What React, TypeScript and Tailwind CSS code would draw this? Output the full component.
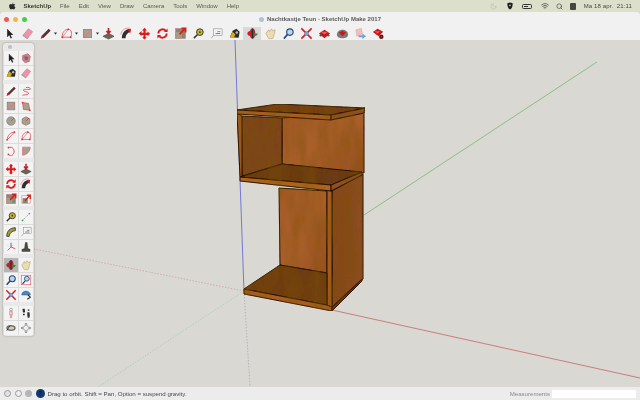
import React from 'react';
import { Moon, Search, Wifi } from 'lucide-react';

type IconName =
  | 'select' | 'component' | 'paint' | 'eraser' | 'pencil' | 'freehand' | 'rect' | 'rotrect'
  | 'circle' | 'polygon' | 'arc' | 'arc2' | 'arc3' | 'pie' | 'move' | 'pushpull' | 'rotate'
  | 'followme' | 'scale' | 'offset' | 'tape' | 'dimension' | 'protractor' | 'text' | 'axes'
  | 'text3d' | 'orbit' | 'pan' | 'zoom' | 'zoomwin' | 'extents' | 'prev' | 'position'
  | 'walk' | 'look' | 'section' | 'gem' | 'gem2' | 'share' | 'gem3';

// all icons on a 14x14 box
const Glyph = ({ name }: { name: IconName }) => {
  switch (name) {
    case 'select':
      return <path d="M4.5 2v9l2.2-2 1.6 3.4 1.4-.7-1.6-3.2h3z" fill="#222" />;
    case 'component':
      return <g><path d="M3 4l6-2 3 3-1 6-5 1.5-3-3z" fill="#b9858c" stroke="#d8606c" strokeWidth=".8" /><path d="M5 5l4 .5.5 3L6 9.5z" fill="#7e6468" /></g>;
    case 'paint':
      return <g><path d="M2 11L5 4l4-2 3.5 3-1 6.5z" fill="#2b2b2b" /><path d="M2 11L5 5l3 3-2 4z" fill="#d6a91f" /><circle cx="9.5" cy="6" r="1.4" fill="#b9b9b9" /></g>;
    case 'eraser':
      return <g><path d="M2 9l6-7 4.5 3-5.5 7.5z" fill="#ee93ab" stroke="#cf6f8a" strokeWidth=".6" /><path d="M2 9l5 3.5" stroke="#a9a0a2" strokeWidth="1.3" /></g>;
    case 'pencil':
      return <g><path d="M2 12.5l1-3L10.5 2l2 2L5 11.5z" fill="#5a3030" /><path d="M2 12.5l1-3 2 2z" fill="#d22" /></g>;
    case 'freehand':
      return <path d="M3 12c2-1 6 0 7-2S4 8 4 6s7 0 8-1-2-3-5-2" fill="none" stroke="#d8404c" strokeWidth="1" />;
    case 'rect':
      return <g><rect x="2.5" y="2.5" width="9" height="9" fill="#a8a08e" stroke="#777" strokeWidth=".7" /><path d="M2.5 11.5l9-9" stroke="#e8707c" strokeWidth=".9" /></g>;
    case 'rotrect':
      return <g><path d="M3 3l7 1 1.5 8-7.5-1z" fill="#a8a08e" stroke="#d33" strokeWidth=".7" /><circle cx="3" cy="3" r="1" fill="#d33" /><circle cx="11.5" cy="12" r="1" fill="#d33" /></g>;
    case 'circle':
      return <g><circle cx="7" cy="7" r="5" fill="#a8a08e" stroke="#777" strokeWidth=".7" /><path d="M7 7l3.5-3.5" stroke="#d33" strokeWidth=".9" /></g>;
    case 'polygon':
      return <g><path d="M7 2l4.5 2.5V10L7 12l-4.500-2V4.500z" fill="#a8a08e" stroke="#777" strokeWidth=".7" /><path d="M7 7l3.5-3.5" stroke="#d33" strokeWidth=".9" /></g>;
    case 'arc':
      return <g><path d="M2.5 11.5C3 6 6 3 11 2.5M2.5 11.5L11 2.5" fill="none" stroke="#d8404c" strokeWidth=".9" /><circle cx="11" cy="2.5" r="1" fill="#d33" /><circle cx="2.5" cy="11.5" r="1" fill="#d33" /></g>;
    case 'arc2':
      return <g><path d="M2.5 11C2 6 5 2.5 9 2.5s4 5 2.5 8.500z" fill="none" stroke="#d8606c" strokeWidth="1" /><path d="M2.5 11L9 2.500" stroke="#d8606c" strokeWidth=".7" /><circle cx="9" cy="2.5" r="1" fill="#d33" /><circle cx="2.5" cy="11" r="1" fill="#d33" /><circle cx="11.5" cy="11" r="1" fill="#d33" /></g>;
    case 'arc3':
      return <g><path d="M4 3c5-2 8 3 6 7s-5 2-6 1" fill="none" stroke="#d8404c" strokeWidth="1" /><circle cx="4" cy="3" r="1" fill="#d33" /><circle cx="4" cy="11" r="1" fill="#d33" /></g>;
    case 'pie':
      return <path d="M3 2.5h9c0 5-4 9-9 9.5z" fill="#a8a08e" stroke="#d8606c" strokeWidth=".7" />;
    case 'move':
      return <path d="M7 .8l2.6 3H8.2v2.4h2v-1.400l3 2.600-3 2.600V8.600h-2V11h1.400L7 13.400 4.400 11h1.400V8.600h-2V10L.8 7l3-2.600v1.800h2V3.800H4.400z" fill="#d91d1d" />;
    case 'pushpull':
      return <g><path d="M1 10l6-3 6 3-6 3z" fill="#6b6559" stroke="#3a3a3a" strokeWidth=".6" /><path d="M7 1v5M4.8 4.2L7 7l2.2-2.8" fill="none" stroke="#c62020" strokeWidth="1.8" /></g>;
    case 'rotate':
      return <g><path d="M2.5 7a4.5 4.5 0 0 1 8-2.8" fill="none" stroke="#d91d1d" strokeWidth="2" /><path d="M11.5 7a4.5 4.5 0 0 1-8 2.8" fill="none" stroke="#d91d1d" strokeWidth="2" /><path d="M12.5 1.5v4h-4zM1.5 12.5v-4h4z" fill="#d91d1d" /></g>;
    case 'followme':
      return <g><path d="M2 12C2 7 5 2.5 11 2v3.5C8 6 6 9 6 12z" fill="#2f2f2f" /><path d="M1 8c0-4 4-7 9-7" fill="none" stroke="#e9808c" strokeWidth=".9" /><path d="M8 3l4-1-1 5z" fill="#d91d1d" /></g>;
    case 'scale':
      return <g><rect x="1.5" y="1.5" width="11" height="11" fill="#8c8471" stroke="#d8808a" strokeWidth=".6" /><rect x="1.5" y="5.5" width="7" height="7" fill="#a59b86" /><path d="M6 8l6-6.5M8 1.5h4.5V6" fill="none" stroke="#d91d1d" strokeWidth="1.8" /></g>;
    case 'offset':
      return <g><path d="M2 3h10v9H2z" fill="none" stroke="#e9808c" strokeWidth=".7" /><rect x="3" y="6" width="6" height="6" fill="#8c8471" /><path d="M6 9l5-6M8 2.5h4V7" fill="none" stroke="#d91d1d" strokeWidth="1.6" /></g>;
    case 'tape':
      return <g><path d="M2 12l4-4" stroke="#333" strokeWidth="1.6" /><circle cx="8.5" cy="5.5" r="3.6" fill="#c9b52a" stroke="#333" strokeWidth="1" /><circle cx="8.5" cy="5.5" r="1" fill="#333" /></g>;
    case 'dimension':
      return <g><path d="M3 11l8-8" stroke="#9a9a9a" strokeWidth=".9" strokeDasharray="1.5 1" /><circle cx="3" cy="11" r="1" fill="#3a3" /><circle cx="11" cy="3" r="1" fill="#888" /></g>;
    case 'protractor':
      return <path d="M2 12C2 6 6 2 12 2v3.5C8.5 5.5 5 8.500 5 12z" fill="#a5a02c" stroke="#333" strokeWidth="1" />;
    case 'text':
      return <g><rect x="4" y="2" width="9" height="7" fill="#f5f5f5" stroke="#888" strokeWidth=".6" /><path d="M6 5h.01M8 5h3M6 7h5" stroke="#555" strokeWidth=".8" /><path d="M1.500 12L4 9" stroke="#999" strokeWidth=".8" /></g>;
    case 'axes':
      return <g><path d="M7 2v5" stroke="#44c" strokeWidth="1" /><path d="M7 7l-4 4" stroke="#3a3" strokeWidth="1" /><path d="M7 7l5 2" stroke="#d33" strokeWidth="1" /><path d="M7 7L3 5M7 7l3-3" stroke="#c99" strokeWidth=".7" strokeDasharray="1 1" /></g>;
    case 'text3d':
      return <path d="M6 1.500h2.500l1 7 2.500 1v3H2v-3l3-1z" fill="#4a4a44" />;
    case 'orbit':
      return <g><ellipse cx="7" cy="7" rx="3" ry="5.500" fill="#b53030" /><path d="M7 7h5.500a5.500 3 0 0 1-5.500 3z" fill="#2b8a3a" /><path d="M1.500 7a5.500 3 0 0 0 5.500 3V4a5.500 3 0 0 0-5.500 3z" fill="#c82020" /><path d="M7 1.500v11" stroke="#2a2a3a" strokeWidth="1.400" /></g>;
    case 'pan':
      return <path d="M2 7l3-4 1 2 2-3 1.500 2L12 3l-1 5-1.500 4.500H5z" fill="#ecdcb2" stroke="#b8a67a" strokeWidth=".7" />;
    case 'zoom':
      return <g><circle cx="8.500" cy="5.500" r="3.500" fill="#bcd3ea" stroke="#264a7a" strokeWidth="1.200" /><path d="M6 8l-4 4.500" stroke="#264a7a" strokeWidth="1.800" /></g>;
    case 'zoomwin':
      return <g><rect x="1.500" y="1.500" width="11" height="11" fill="none" stroke="#e9606c" strokeWidth=".8" /><circle cx="8" cy="5.500" r="2.800" fill="#bcd3ea" stroke="#264a7a" strokeWidth="1" /><path d="M6 8l-3 3.500" stroke="#264a7a" strokeWidth="1.500" /></g>;
    case 'extents':
      return <g><rect x="4.500" y="4.500" width="5" height="5" fill="#6fa4d8" /><path d="M1.500 1.500l4 4M12.500 1.500l-4 4M1.500 12.500l4-4M12.500 12.500l-4-4" stroke="#cc2222" strokeWidth="1.700" /></g>;
    case 'prev':
      return <g><path d="M2 7c0-3 3-5 6-4.500S12 5 12 7H9L2 7z" fill="#4d86bd" stroke="#2c5a8a" strokeWidth=".6" /><path d="M9 6.500l3 3-3.500 2.500" fill="none" stroke="#333" strokeWidth="1.400" /></g>;
    case 'position':
      return <g><circle cx="7" cy="3" r="1.600" fill="#eee" stroke="#777" strokeWidth=".6" /><path d="M5.500 5h3v4h-.8v3.500H6.300V9h-.8z" fill="#f2d6d6" stroke="#c55" strokeWidth=".6" /></g>;
    case 'walk':
      return <path d="M3 2h2.500l.5 3.500-.5 1H3.500L3 4zM8.500 6h2.500l.5 3.500-.5 3H9l-.5-3zM3.500 8h2v1.500h-2zM9 3h2v1.500H9z" fill="#333" />;
    case 'look':
      return <g><ellipse cx="7" cy="7" rx="5.500" ry="3.500" fill="#77736a" /><ellipse cx="7" cy="7" rx="3.500" ry="1.800" fill="#cfccc5" /><path d="M2 10l4-6" stroke="#333" strokeWidth="1" /></g>;
    case 'section':
      return <g><path d="M7 1l2 2H5zM7 13l2-2H5zM1 7l2-2v4zM13 7l-2-2v4z" fill="#777" /><circle cx="7" cy="7" r="3" fill="none" stroke="#888" strokeWidth=".8" /></g>;
    case 'gem':
      return <g><path d="M1 7l6-4 6 4-6 5z" fill="#c81414" /><path d="M3 5h8l-4 3z" fill="#ef5b5b" /><circle cx="3" cy="9" r="1.300" fill="#555" /><circle cx="11" cy="9" r="1.300" fill="#555" /></g>;
    case 'gem2':
      return <g><path d="M1 8c0-3 3-5 6-5s6 2 6 5-3 4-6 4-6-1-6-4z" fill="#7a7a7a" /><path d="M3 6l4-2 4 2-4 4z" fill="#cf1717" /></g>;
    case 'share':
      return <g><path d="M2 3l6-1.500 1 6L3 10z" fill="#f4bcbc" stroke="#e59a9a" strokeWidth=".5" /><path d="M5 9h4V7l4 3-4 3v-2H5z" fill="#6ea4dc" /></g>;
    case 'gem3':
      return <g><path d="M1 5.500L6 2l6 3-5 5z" fill="#c81414" /><path d="M3 4.500h6L6 7z" fill="#ef5b5b" /><circle cx="10" cy="10.500" r="2.400" fill="#5a1010" /><circle cx="10" cy="10.500" r=".9" fill="#d33" /></g>;
  }
};

const Icon = ({ name, size = 12 }: { name: IconName; size?: number }) => (
  <svg viewBox="0 0 14 14" width={size} height={size}>
    <Glyph name={name} />
  </svg>
);

const Caret = () => (
  <svg viewBox="0 0 4 3" className="w-[3px] h-[3px] shrink-0">
    <path d="M0 0h4L2 3z" fill="#333" />
  </svg>
);

const ToolButton = ({ name, active }: { name: IconName; active?: boolean }) => (
  <div className={`flex items-center justify-center w-[18px] h-[15px] shrink-0 rounded-[2px] ${active ? 'bg-[#d9d9d9]' : ''}`}>
    <Icon name={name} size={13} />
  </div>
);

const paletteGroups: IconName[][] = [
  ['select', 'component', 'paint', 'eraser'],
  ['pencil', 'freehand', 'rect', 'rotrect', 'circle', 'polygon', 'arc', 'arc2', 'arc3', 'pie'],
  ['move', 'pushpull', 'rotate', 'followme', 'scale', 'offset'],
  ['tape', 'dimension', 'protractor', 'text', 'axes', 'text3d'],
  ['orbit', 'pan', 'zoom', 'zoomwin', 'extents', 'prev'],
  ['position', 'walk', 'look', 'section'],
];

const Palette = () => (
  <div className="absolute left-[3px] top-[3px] w-[31px] bg-[#e9e9e9] rounded-[3px] shadow-[0_0_2px_rgba(0,0,0,0.35)] pb-[1px]">
    <div className="h-[8px] flex items-center pl-[5px] rounded-t-[3px]">
      <div className="w-[4px] h-[4px] rounded-full bg-[#bdbdbd]" />
    </div>
    <div className="flex flex-col gap-[4px]">
      {paletteGroups.map((group, i) => (
        <div key={i} className="grid grid-cols-2 gap-px px-px bg-[#dcdcdc]">
          {group.map((name) => (
            <div
              key={name}
              className={`h-[14px] flex items-center justify-center ${name === 'orbit' ? 'bg-[#b4b4b4]' : 'bg-[#f3f3f3]'}`}
            >
              <Icon name={name} size={12} />
            </div>
          ))}
        </div>
      ))}
    </div>
  </div>
);

// the model and the axes, in page pixels minus the 40px of chrome above the viewport
const Model = () => (
  <svg viewBox="0 40 640 347" className="absolute inset-0 w-full h-full">
    <defs>
      <linearGradient id="backWood" x1="0" y1="0" x2="1" y2="1">
        <stop offset="0" stopColor="#a35a27" />
        <stop offset=".5" stopColor="#aa602b" />
        <stop offset="1" stopColor="#975122" />
      </linearGradient>
      <linearGradient id="darkWood" x1="0" y1="0" x2="1" y2="0">
        <stop offset="0" stopColor="#84481d" />
        <stop offset="1" stopColor="#8c4e21" />
      </linearGradient>
      {/* soft grain over the wood faces */}
      <filter id="grain" x="0" y="0" width="100%" height="100%">
        <feTurbulence type="fractalNoise" baseFrequency="0.09 0.025" numOctaves="2" seed="4" result="noise" />
        <feColorMatrix in="noise" type="matrix" values="0 0 0 0 0.2  0 0 0 0 0.08  0 0 0 0 0  0 0 0 .9 -.28" result="tint" />
        <feComposite in="tint" in2="SourceAlpha" operator="in" result="clipped" />
        <feMerge>
          <feMergeNode in="SourceGraphic" />
          <feMergeNode in="clipped" />
        </feMerge>
      </filter>
    </defs>
    <g fill="none">
      <path d="M235 40L244 291" stroke="#5b5fd6" strokeWidth=".8" />
      <path d="M244 291L250 387" stroke="#a8a8c8" strokeWidth=".8" strokeDasharray="1.500 1.500" />
      <path d="M364 215L597 62" stroke="#78b878" strokeWidth=".8" />
      <path d="M244 291L98 387" stroke="#a8cca8" strokeWidth=".8" strokeDasharray="1.500 1.500" />
      <path d="M332 310L640 378" stroke="#c86464" strokeWidth=".8" />
      <path d="M244 291L34 249" stroke="#d0a0a0" strokeWidth=".8" strokeDasharray="1.500 1.500" />
    </g>
    <g stroke="#24130a" strokeWidth="1" strokeLinejoin="round" filter="url(#grain)">
      {/* lower back panel */}
      <path d="M279 188L327 191V273L280 265Z" fill="url(#backWood)" />
      {/* right side panel */}
      <path d="M332 191L363 174V279L332 308Z" fill="url(#darkWood)" />
      <path d="M327 190L332 191V307L327 305Z" fill="#a85d20" />
      {/* bottom shelf */}
      <path d="M244 289L280 265L327 273V305Z" fill="#6e3d17" />
      <path d="M244 289L327 305L332 307V311L244 294Z" fill="#aa5e20" />
      <path d="M332 307L362 279V281L332 311Z" fill="#5e3412" />
      {/* upper bay */}
      <path d="M282 118L364 112V173L282 164Z" fill="url(#backWood)" />
      <path d="M242 116L282 118V164L242 176Z" fill="#7d441b" />
      <path d="M237 113L242 116V176L240 177Z" fill="#a35a20" />
      {/* middle shelf */}
      <path d="M240 177L282 164L362 172L331 185Z" fill="#6a3b16" />
      <path d="M240 177L331 185L331 191L240 181Z" fill="#b06522" />
      <path d="M331 185L362 172V175L331 191Z" fill="#8f5120" />
      {/* top board */}
      <path d="M237 110L278 104L365 108L331 115Z" fill="#743f17" />
      <path d="M237 110L331 115V120L237 114Z" fill="#aa5f20" />
      <path d="M331 115L365 108L364 113L331 120Z" fill="#8f5120" />
    </g>
  </svg>
);

export default function App() {
  const menus = ['File', 'Edit', 'View', 'Draw', 'Camera', 'Tools', 'Window', 'Help'];

  return (
    <div className="w-[640px] h-[400px] flex flex-col overflow-hidden bg-[#d9d8d3] font-['Liberation_Sans',Arial,sans-serif] blur-[0.3px]">
      {/* macOS menu bar */}
      <div className="h-[12px] shrink-0 bg-[#dce0cb] flex items-center text-[6px] text-[#33362c]">
        <svg viewBox="0 0 14 14" className="w-[8px] h-[8px] ml-[8px]">
          <path d="M9.500 1C8.500 1.200 7.500 2.200 7.600 3.400 8.700 3.400 9.700 2.300 9.500 1zM7.500 4C6.500 4 6 3.500 5 3.500 3.300 3.500 2 5 2 7.500 2 10 3.700 13 5 13c1 0 1.300-.6 2.500-.6s1.400.6 2.500.6c1.200 0 2.500-2.200 3-3.700-2.400-1-2.500-4.400-.2-5.300C12 3 10.800 3.500 10 3.500 9 3.500 8.500 4 7.500 4z" fill="#2a2a2a" />
        </svg>
        <span className="ml-[7.500px] font-bold w-[36.500px]">SketchUp</span>
        <div className="flex gap-[9px] opacity-80">
          {menus.map((m) => <span key={m}>{m}</span>)}
        </div>
        <div className="ml-auto flex items-center mr-[8px]">
          <Moon className="w-[7px] h-[7px] text-[#b9bcab] mr-[10px]" />
          <svg viewBox="0 0 10 12" className="w-[6px] h-[8px] mr-[9px]">
            <path d="M5 0l4.500 1.500C9.500 6 8.500 10 5 12 1.500 10 .5 6 .5 1.500z" fill="#1c1c1c" />
            <circle cx="5" cy="5" r="1.300" fill="#dce0cb" />
          </svg>
          <div className="w-[10px] h-[5px] border border-[#33362c] rounded-[1.5px] p-px mr-[9px]">
            <div className="w-[4px] h-full bg-[#33362c]" />
          </div>
          <Wifi className="w-[8px] h-[8px] text-[#33362c] mr-[7px]" />
          <Search className="w-[7px] h-[7px] text-[#33362c] mr-[7px]" />
          <div className="w-[6px] h-[7px] bg-[#44473c] rounded-[1px] mr-[8px]" />
          <span className="opacity-90 tracking-[0.12px]">Ma 18 apr.&nbsp;&nbsp;21:11</span>
        </div>
      </div>

      {/* window title */}
      <div className="h-[15px] shrink-0 bg-[#f1f1f1] rounded-t-[4px] relative flex items-center justify-center text-[6px] font-bold text-[#5a5a5a]">
        <div className="absolute left-[3.500px] flex gap-[4px]">
          <div className="w-[5px] h-[5px] rounded-full bg-[#ee5a52]" />
          <div className="w-[5px] h-[5px] rounded-full bg-[#f5b83c]" />
          <div className="w-[5px] h-[5px] rounded-full bg-[#4cc94a]" />
        </div>
        <div className="w-[5px] h-[5px] rounded-full bg-[#a9c6dc] mr-[3px]" />
        <span>Nachtkastje Teun - SketchUp Make 2017</span>
      </div>

      {/* toolbar */}
      <div className="h-[13px] shrink-0 bg-[#f1f1f1] flex items-center">
        <ToolButton name="select" />
        <ToolButton name="eraser" />
        <ToolButton name="pencil" />
        <Caret />
        <ToolButton name="arc2" />
        <Caret />
        <ToolButton name="rect" />
        <Caret />
        <ToolButton name="pushpull" />
        <ToolButton name="followme" />
        <ToolButton name="move" />
        <ToolButton name="rotate" />
        <ToolButton name="scale" />
        <ToolButton name="tape" />
        <ToolButton name="text" />
        <ToolButton name="paint" />
        <ToolButton name="orbit" active />
        <ToolButton name="pan" />
        <ToolButton name="zoom" />
        <ToolButton name="extents" />
        <ToolButton name="gem" />
        <ToolButton name="gem2" />
        <ToolButton name="share" />
        <ToolButton name="gem3" />
      </div>

      {/* viewport */}
      <div className="flex-1 relative bg-[#d9d8d3]">
        <Model />
        <Palette />
      </div>

      {/* status bar */}
      <div className="h-[13px] shrink-0 bg-[#ececec] flex items-center text-[6.1px] text-[#484848]">
        <div className="flex items-center gap-[3.500px] ml-[4px]">
          <div className="w-[7px] h-[7px] rounded-full border border-[#9a9a9a] bg-[#e2e2e2]" />
          <div className="w-[7px] h-[7px] rounded-full border border-[#9a9a9a] bg-[#efefef]" />
          <div className="w-[7px] h-[7px] rounded-full bg-[#b5b5b5]" />
          <div className="w-[9px] h-[9px] rounded-full bg-[#123a6e] flex items-center justify-center text-[6px] font-bold text-[#0b1f3a]">?</div>
        </div>
        <span className="ml-[3px]">Drag to orbit. Shift = Pan, Option = suspend gravity.</span>
        <span className="ml-auto mr-[2px] text-[#888]">Measurements</span>
        <div className="w-[84px] h-[8px] bg-white mr-[4px]" />
      </div>
    </div>
  );
}
